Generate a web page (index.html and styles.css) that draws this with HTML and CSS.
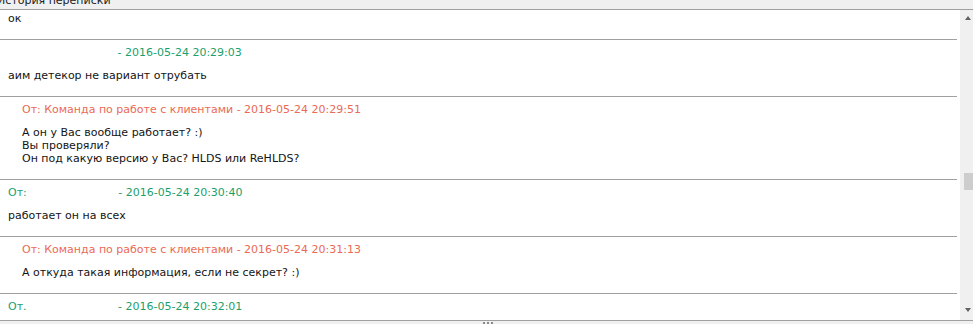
FILE: index.html
```html
<!DOCTYPE html>
<html lang="ru">
<head>
<meta charset="utf-8">
<title>История переписки</title>
<link rel="stylesheet" href="styles.css">
</head>
<body>
<div class="window">
  <div class="titlebar"><span class="title">История переписки</span></div>
  <div class="pane">
    <div class="log">
      <div class="msg client cont">
        <div class="body">ок</div>
      </div>
      <div class="msg client">
        <div class="head"><span class="hidden-name w1"></span> - 2016-05-24 20:29:03</div>
        <div class="body">аим детекор не вариант отрубать</div>
      </div>
      <div class="msg staff">
        <div class="head">От: Команда по работе с клиентами - 2016-05-24 20:29:51</div>
        <div class="body">А он у Вас вообще работает? :)<br>Вы проверяли?<br>Он под какую версию у Вас? HLDS или ReHLDS?</div>
      </div>
      <div class="msg client">
        <div class="head">От:<span class="hidden-name w2"></span> - 2016-05-24 20:30:40</div>
        <div class="body">работает он на всех</div>
      </div>
      <div class="msg staff">
        <div class="head">От: Команда по работе с клиентами - 2016-05-24 20:31:13</div>
        <div class="body">А откуда такая информация, если не секрет? :)</div>
      </div>
      <div class="msg client">
        <div class="head">От.<span class="hidden-name w2"></span> - 2016-05-24 20:32:01</div>
        <div class="body">&nbsp;</div>
      </div>
    </div>
    <div class="scrollbar">
      <div class="arrow up"></div>
      <div class="track"><div class="thumb"></div></div>
      <div class="arrow down"></div>
    </div>
  </div>
  <div class="statusbar"><span class="grip"><i></i><i></i><i></i></span></div>
</div>
</body>
</html>
```
FILE: styles.css
```css
html, body {
  margin: 0;
  padding: 0;
  overflow: hidden;
  background: #f0f0f0;
}
.window {
  width: 977px;
  height: 324px;
  display: flex;
  flex-direction: column;
  font-family: "DejaVu Sans", Verdana, sans-serif;
  font-size: 11px;
  color: #141414;
}
.titlebar {
  height: 9px;
  overflow: hidden;
  background: #f0f0f0;
  border-bottom: 1px solid #a0a0a0;
}
.title {
  display: block;
  margin: -6px 0 0 -3px;
  line-height: 13px;
  font-size: 11px;
  color: #222;
}
.pane {
  flex: 1;
  display: flex;
  min-height: 0;
  background: #fff;
}
.log {
  width: 960px;
  overflow: hidden;
}
.msg {
  margin-right: 3px;
  padding: 6px 0 14px 8px;
  border-bottom: 1px solid #a0a0a0;
}
.msg.staff {
  padding-left: 22px;
}
.msg.cont {
  padding-top: 2px;
}
.head {
  line-height: 13px;
  margin-bottom: 10px;
  white-space: pre;
}
.client .head { color: #1c9f6c; }
.staff .head { color: #ea6a55; }
.body {
  line-height: 13px;
}
.hidden-name {
  display: inline-block;
  height: 1px;
}
.w1 { width: 106px; }
.w2 { width: 88px; }
.scrollbar {
  width: 17px;
  background: #f0f0f0;
  display: flex;
  flex-direction: column;
}
.arrow {
  height: 17px;
  display: flex;
  justify-content: flex-start;
  padding-left: 5px;
}
.arrow::before {
  content: "";
  width: 0;
  height: 0;
  border-left: 3.5px solid transparent;
  border-right: 3.5px solid transparent;
}
.arrow.up { align-items: flex-start; padding-top: 6px; height: 11px; }
.arrow.up::before { border-bottom: 4px solid #606060; }
.arrow.down { align-items: flex-end; padding-bottom: 8px; height: 9px; }
.arrow.down::before { border-top: 4px solid #606060; }
.track {
  flex: 1;
  padding: 146px 4px 0 4px;
}
.thumb {
  height: 17px;
  background: #cdcdcd;
}
.statusbar {
  height: 3px;
  border-top: 1px solid #a0a0a0;
  background: #f0f0f0;
  display: flex;
  justify-content: center;
  padding-right: 4px;
}
.grip {
  display: flex;
  gap: 2px;
  padding-top: 1px;
  margin-left: 2px;
}
.grip i {
  width: 2px;
  height: 2px;
  background: #8a8a8a;
}
```
